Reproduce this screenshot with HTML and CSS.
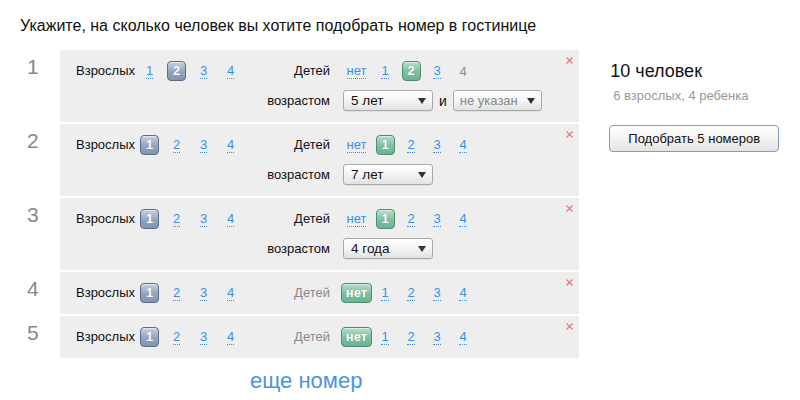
FILE: index.html
```html
<!DOCTYPE html>
<html lang="ru">
<head>
<meta charset="utf-8">
<title>Подбор номеров</title>
<link rel="stylesheet" href="styles.css">
</head>
<body>
<h1 class="title">Укажите, на сколько человек вы хотите подобрать номер в гостинице</h1>
<div class="content">
  <div class="rooms">
    <div class="room">
      <div class="num">1</div>
      <div class="panel">
        <div class="line1">
          <span class="label">Взрослых</span>
          <span class="opts">
            <span class="opt"><a class="lnk">1</a></span>
            <span class="opt"><span class="badge blue">2</span></span>
            <span class="opt"><a class="lnk">3</a></span>
            <span class="opt"><a class="lnk">4</a></span>
          </span>
        </div>
        <span class="klabel">Детей</span>
        <span class="opts kids">
          <span class="opt none"><a class="lnk">нет</a></span>
          <span class="opt"><a class="lnk">1</a></span>
          <span class="opt"><span class="badge green">2</span></span>
          <span class="opt"><a class="lnk">3</a></span>
          <span class="opt"><span class="off">4</span></span>
        </span>
        <span></span>
        <span class="klabel">возрастом</span>
        <span class="ages">
          <span class="select"><span>5 лет</span><i class="arrow"></i></span>
          <span class="and">и</span>
          <span class="select empty"><span>не указан</span><i class="arrow"></i></span>
        </span>
        <svg class="close" width="7" height="7" viewBox="0 0 7 7"><path d="M0.5 0.5L6.5 6.5M6.5 0.5L0.5 6.5" stroke="#ee7b7b" stroke-width="1.4"/></svg>
      </div>
    </div>

    <div class="room">
      <div class="num">2</div>
      <div class="panel">
        <div class="line1">
          <span class="label">Взрослых</span>
          <span class="opts">
            <span class="opt"><span class="badge blue">1</span></span>
            <span class="opt"><a class="lnk">2</a></span>
            <span class="opt"><a class="lnk">3</a></span>
            <span class="opt"><a class="lnk">4</a></span>
          </span>
        </div>
        <span class="klabel">Детей</span>
        <span class="opts kids">
          <span class="opt none"><a class="lnk">нет</a></span>
          <span class="opt"><span class="badge green">1</span></span>
          <span class="opt"><a class="lnk">2</a></span>
          <span class="opt"><a class="lnk">3</a></span>
          <span class="opt"><a class="lnk">4</a></span>
        </span>
        <span></span>
        <span class="klabel">возрастом</span>
        <span class="ages">
          <span class="select"><span>7 лет</span><i class="arrow"></i></span>
        </span>
        <svg class="close" width="7" height="7" viewBox="0 0 7 7"><path d="M0.5 0.5L6.5 6.5M6.5 0.5L0.5 6.5" stroke="#ee7b7b" stroke-width="1.4"/></svg>
      </div>
    </div>

    <div class="room">
      <div class="num">3</div>
      <div class="panel">
        <div class="line1">
          <span class="label">Взрослых</span>
          <span class="opts">
            <span class="opt"><span class="badge blue">1</span></span>
            <span class="opt"><a class="lnk">2</a></span>
            <span class="opt"><a class="lnk">3</a></span>
            <span class="opt"><a class="lnk">4</a></span>
          </span>
        </div>
        <span class="klabel">Детей</span>
        <span class="opts kids">
          <span class="opt none"><a class="lnk">нет</a></span>
          <span class="opt"><span class="badge green">1</span></span>
          <span class="opt"><a class="lnk">2</a></span>
          <span class="opt"><a class="lnk">3</a></span>
          <span class="opt"><a class="lnk">4</a></span>
        </span>
        <span></span>
        <span class="klabel">возрастом</span>
        <span class="ages">
          <span class="select"><span>4 года</span><i class="arrow"></i></span>
        </span>
        <svg class="close" width="7" height="7" viewBox="0 0 7 7"><path d="M0.5 0.5L6.5 6.5M6.5 0.5L0.5 6.5" stroke="#ee7b7b" stroke-width="1.4"/></svg>
      </div>
    </div>

    <div class="room">
      <div class="num">4</div>
      <div class="panel">
        <div class="line1">
          <span class="label">Взрослых</span>
          <span class="opts">
            <span class="opt"><span class="badge blue">1</span></span>
            <span class="opt"><a class="lnk">2</a></span>
            <span class="opt"><a class="lnk">3</a></span>
            <span class="opt"><a class="lnk">4</a></span>
          </span>
        </div>
        <span class="klabel grey">Детей</span>
        <span class="opts kids">
          <span class="opt none"><span class="badge green wide">нет</span></span>
          <span class="opt"><a class="lnk">1</a></span>
          <span class="opt"><a class="lnk">2</a></span>
          <span class="opt"><a class="lnk">3</a></span>
          <span class="opt"><a class="lnk">4</a></span>
        </span>
        <svg class="close" width="7" height="7" viewBox="0 0 7 7"><path d="M0.5 0.5L6.5 6.5M6.5 0.5L0.5 6.5" stroke="#ee7b7b" stroke-width="1.4"/></svg>
      </div>
    </div>

    <div class="room">
      <div class="num">5</div>
      <div class="panel">
        <div class="line1">
          <span class="label">Взрослых</span>
          <span class="opts">
            <span class="opt"><span class="badge blue">1</span></span>
            <span class="opt"><a class="lnk">2</a></span>
            <span class="opt"><a class="lnk">3</a></span>
            <span class="opt"><a class="lnk">4</a></span>
          </span>
        </div>
        <span class="klabel grey">Детей</span>
        <span class="opts kids">
          <span class="opt none"><span class="badge green wide">нет</span></span>
          <span class="opt"><a class="lnk">1</a></span>
          <span class="opt"><a class="lnk">2</a></span>
          <span class="opt"><a class="lnk">3</a></span>
          <span class="opt"><a class="lnk">4</a></span>
        </span>
        <svg class="close" width="7" height="7" viewBox="0 0 7 7"><path d="M0.5 0.5L6.5 6.5M6.5 0.5L0.5 6.5" stroke="#ee7b7b" stroke-width="1.4"/></svg>
      </div>
    </div>

    <div class="more"><a class="more-link">еще номер</a></div>
  </div>

  <div class="summary">
    <div class="total">10 человек</div>
    <div class="detail">6 взрослых, 4 ребенка</div>
    <button class="pick">Подобрать 5 номеров</button>
  </div>
</div>
</body>
</html>
```

FILE: styles.css
```css
* { box-sizing: border-box; }

body {
  margin: 0;
  padding: 16px 20px 0;
  font-family: "Liberation Sans", Arial, sans-serif;
  font-size: 13px;
  color: #111;
  background: #fff;
}

.title {
  margin: 0 0 14px;
  font-size: 16px;
  font-weight: normal;
  line-height: 20px;
  color: #111;
}

.content {
  display: flex;
}

.rooms {
  width: 560px;
  display: flex;
  flex-direction: column;
  gap: 2px;
}

.room {
  display: flex;
}

.num {
  width: 40px;
  padding: 5px 0 0 7px;
  font-size: 21px;
  line-height: 24px;
  color: #888;
}

.panel {
  flex: 1;
  position: relative;
  background: #eeeeee;
  padding: 11px 16px 11px;
  display: grid;
  grid-template-columns: 174px 69px 1fr;
  column-gap: 11px;
  row-gap: 9px;
  align-items: center;
}

.line1 {
  display: flex;
  align-items: center;
  height: 20px;
}

.label {
  line-height: 20px;
}

.klabel {
  text-align: right;
  line-height: 20px;
  white-space: nowrap;
}

.klabel.grey { color: #888; }

.opts {
  display: flex;
  align-items: center;
  margin-left: 1px;
  height: 20px;
}

.opts.kids { margin-left: 0; }

.opt {
  width: 27px;
  display: flex;
  justify-content: center;
  align-items: center;
}

.kids .opt { width: 26px; }
.kids .opt.none { width: 31px; }

.lnk {
  color: #3d8ee3;
  text-decoration: none;
  line-height: 14px;
  border-bottom: 1px dotted #3d8ee3;
  cursor: pointer;
}

.off {
  color: #888;
}

.badge {
  display: inline-block;
  width: 19px;
  height: 20px;
  line-height: 18px;
  text-align: center;
  border-radius: 4px;
  color: #fff;
  font-weight: bold;
  font-size: 13px;
  text-shadow: 0 0 1px rgba(0,0,0,0.25);
}

.badge.blue {
  border: 1px solid #5c6c88;
  background: linear-gradient(#c6d1e3, #93a3bf 55%, #8295b3);
  box-shadow: inset 0 1px 0 rgba(255,255,255,0.5);
}

.badge.green {
  border: 1px solid #4d8d70;
  background: linear-gradient(#b4e0cb, #7dbfa2 55%, #6cb393);
  box-shadow: inset 0 1px 0 rgba(255,255,255,0.5);
}

.badge.wide {
  width: 31px;
}

.ages {
  display: flex;
  align-items: center;
  margin-left: 2px;
}

.select {
  width: 90px;
  height: 21px;
  display: flex;
  align-items: center;
  justify-content: space-between;
  padding: 0 6px 0 7px;
  border: 1px solid #a9a9a9;
  border-radius: 3px;
  background: linear-gradient(#ffffff, #f4f4f4 50%, #e2e2e2);
  font-size: 13.5px;
  color: #111;
  box-shadow: 0 1px 0 rgba(0,0,0,0.05);
}

.select.empty {
  width: 89px;
  color: #888;
  font-size: 13px;
  padding-left: 6px;
}

.arrow {
  width: 0;
  height: 0;
  border-left: 4px solid transparent;
  border-right: 4px solid transparent;
  border-top: 6px solid #333;
}

.and {
  margin: 0 6px;
  font-size: 14px;
}

.close {
  position: absolute;
  top: 7px;
  right: 6px;
}

.more {
  padding: 10px 0 0 230px;
}

.more-link {
  font-size: 22px;
  line-height: 22px;
  color: #4a94e6;
  text-decoration: none;
  border-bottom: 1px dotted #4a94e6;
  cursor: pointer;
}

.summary {
  margin-left: 29px;
  padding-top: 10px;
  width: 172px;
}

.total {
  padding-left: 2px;
  font-size: 18px;
  line-height: 22px;
  color: #111;
}

.detail {
  margin-top: 5px;
  padding-left: 5px;
  color: #999;
  font-size: 13px;
  line-height: 18px;
}

.pick {
  margin: 20px 0 0 1px;
  width: 170px;
  height: 27px;
  font-family: "Liberation Sans", Arial, sans-serif;
  font-size: 13px;
  color: #111;
  border: 1px solid #7f9fc6;
  border-radius: 4px;
  background: linear-gradient(#ffffff, #f3f3f3 50%, #e3e3e3);
  padding: 0;
}
```
